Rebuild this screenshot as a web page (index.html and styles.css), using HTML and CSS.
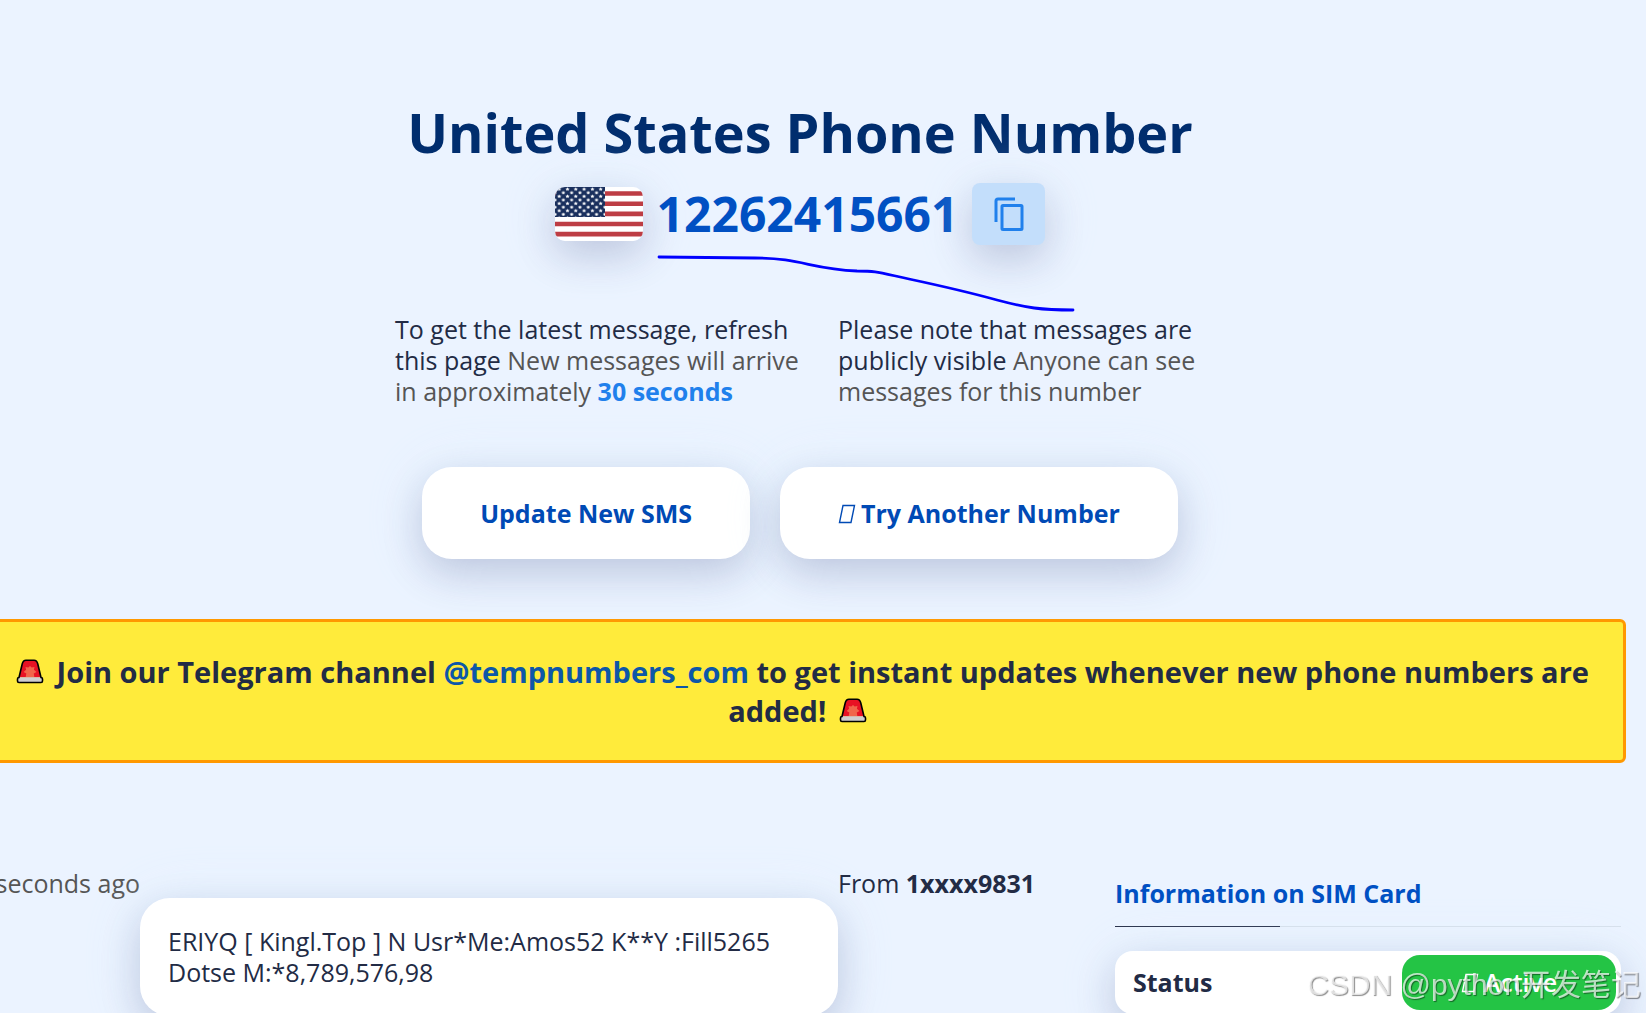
FILE: index.html
```
<!DOCTYPE html>
<html lang="en">
<head>
    <meta charset="UTF-8">
    <meta name="viewport" content="width=device-width, initial-scale=1.0">
    <title>United States Phone Number</title>
    <link rel="stylesheet" href="styles.css">
</head>
<body>

<!-- Shared shapes -->
<svg class="defs" width="0" height="0" aria-hidden="true">
    <defs>
        <symbol id="siren" viewBox="0 0 28 25">
            <path d="M3 18.500 6.200 5C6.800 2.500 8 1.300 10 1.300h8c2 0 3.200 1.200 3.800 3.700L25 18.500z" fill="#e81224"/>
            <path d="m14 7 1.700 1.600 2.800-.6-.6 2.700 2.600 2.300-2.700 1.500.6 4H9.600l.7-4L7.600 13l2.500-2.300-.6-2.700 2.800.6z" fill="#f1664b"/>
            <path d="M1.500 19q0-.8.8-.8h23.400q.8 0 .8.800v3.700q0 .8-.8.800H2.300q-.8 0-.8-.8z" fill="#d0cecf"/>
            <path d="M3 18.500 6.200 5C6.800 2.500 8 1.300 10 1.300h8c2 0 3.200 1.200 3.800 3.700L25 18.500q1.500 0 1.500 1.500v2q0 1.500-1.500 1.500H3Q1.500 23.500 1.500 22v-2q0-1.500 1.500-1.500z" fill="none" stroke="#000" stroke-width="1.600"/>
        </symbol>
        <symbol id="box" viewBox="0 0 18 20">
            <path d="M5 1.500h11.500L13 18.500H1.500z" fill="none" stroke="currentColor" stroke-width="1.400"/>
        </symbol>
        <pattern id="stars" width="8.300" height="7.200" patternUnits="userSpaceOnUse">
            <path id="star" d="m4.200.2.600 1.200 1.400.2-1 1 .3 1.300-1.300-.7-1.300.7.300-1.300-1-1 1.400-.2z" fill="#fff"/>
            <use href="#star" x="-4.150" y="3.600"/>
            <use href="#star" x="4.150" y="3.600"/>
        </pattern>
    </defs>
</svg>

<main class="page">
    <section class="hero">
        <h1>United States Phone Number</h1>

        <div class="number-row">
            <svg class="flag" viewBox="0 0 88 54" role="img" aria-label="United States">
                <rect width="88" height="54" fill="#fff"/>
                <path d="M0 6.500h88M0 16.700h88M0 26.900h88M0 37h88M0 47.100h88" stroke="#bd3d44" stroke-width="4.600"/>
                <rect width="50" height="30" fill="#192f5d"/>
                <rect width="50" height="30" fill="url(#stars)"/>
            </svg>
            <span class="number">12262415661</span>
            <button class="copy" type="button" aria-label="Copy number">
                <svg viewBox="0 0 30 34" width="30" height="34" fill="none" stroke="#2080ec" stroke-width="3">
                    <path d="M21 2H4Q2 2 2 4v21"/>
                    <rect x="8" y="8.500" width="20" height="24" rx="1"/>
                </svg>
            </button>
            <svg class="curve" viewBox="0 0 420 60" width="420" height="60" aria-hidden="true">
                <path d="M2 4 98 5C144 5 154 16 200 18C220 18 220 19 252 26C280 32 311 39 340 47C370 55 384 57 416 57" fill="none" stroke="#0000ff" stroke-width="2.800" stroke-linecap="round"/>
            </svg>
        </div>

        <div class="notes">
            <p>To get the latest message, refresh this page <span>New messages will arrive in approximately <b>30 seconds</b></span></p>
            <p>Please note that messages are publicly visible <span>Anyone can see messages for this number</span></p>
        </div>

        <div class="actions">
            <button class="btn" type="button">Update New SMS</button>
            <button class="btn" type="button"><svg class="box"><use href="#box"/></svg>Try Another Number</button>
        </div>
    </section>

    <div class="banner">
        <svg class="siren"><use href="#siren"/></svg>
        Join our Telegram channel <a href="#">@tempnumbers_com</a> to get instant updates whenever new phone numbers are added!
        <svg class="siren"><use href="#siren"/></svg>
    </div>

    <section class="content">
        <div class="time">seconds ago</div>
        <div class="message">ERIYQ [ Kingl.Top ] N Usr*Me:Amos52 K**Y :Fill5265 Dotse M:*8,789,576,98</div>
        <div class="from">From <b>1xxxx9831</b></div>
        <aside class="sim">
            <h2>Information on SIM Card</h2>
            <div class="line"></div>
            <div class="status">
                <b>Status</b>
                <span class="badge"><svg class="box"><use href="#box"/></svg>Active</span>
            </div>
        </aside>
    </section>
</main>

<div class="watermark">CSDN @python开发笔记</div>

</body>
</html>
```

FILE: styles.css
```
* {
    box-sizing: border-box;
}
body {
    margin: 0;
    height: 100vh;
    overflow: hidden;
    background-color: #ebf3ff;
    color: #222b45;
    font-family: "Open Sans", "Noto Sans", sans-serif;
    font-size: 25px;
    line-height: 31px;
}
h1, h2, p {
    margin: 0;
}
button {
    border: none;
    font: inherit;
    cursor: pointer;
}
.defs {
    position: absolute;
}

/* wider than the window on the left side */
.page {
    margin: 0 20px 0 -26px;
}

.hero {
    display: flex;
    flex-direction: column;
    align-items: center;
    padding-top: 96px;
}
h1 {
    color: #002d6e;
    font-size: 54px;
    line-height: 72px;
    font-weight: 700;
}
.number-row {
    position: relative;
    display: flex;
    align-items: center;
    gap: 14px;
    margin-top: 15px;
}
.flag {
    width: 88px;
    height: 54px;
    border-radius: 10px;
}
.flag, .copy, .btn, .message, .status {
    box-shadow: 0 14px 40px rgba(20, 20, 90, 0.2), 0 4px 60px rgba(225, 245, 255, 0.6);
}
.number {
    color: #0050c3;
    font-size: 48px;
    line-height: 62px;
    font-weight: 700;
}
.copy {
    display: flex;
    align-items: center;
    justify-content: center;
    width: 73px;
    height: 62px;
    padding: 0;
    border-radius: 8px;
    background-color: #c3defb;
}
.curve {
    position: absolute;
    top: 70px;
    left: 102px;
}

.notes {
    display: grid;
    grid-template-columns: 413px 367px;
    gap: 30px;
    margin-top: 69px;
}
.notes span {
    color: #555;
}
.notes b {
    color: #2080ec;
}

.actions {
    display: flex;
    gap: 30px;
    margin-top: 60px;
}
.btn {
    height: 92px;
    padding: 0 58px;
    border-radius: 30px;
    background-color: #fff;
    color: #004ab5;
    font-weight: 700;
}
.box {
    width: 18px;
    height: 20px;
    margin-right: 5px;
    vertical-align: -1px;
}

.banner {
    margin-top: 60px;
    padding: 30px;
    border: 3px solid #ff9800;
    border-radius: 6px;
    background-color: #ffeb3b;
    color: #222b45;
    font-size: 29px;
    line-height: 39px;
    font-weight: 700;
    text-align: center;
}
.banner a {
    color: #0d57a8;
    text-decoration: none;
}
.siren {
    width: 28px;
    height: 25px;
    margin: 0 5px;
    vertical-align: -1px;
}

.content {
    display: grid;
    grid-template-columns: 166fr 698fr 277fr 506fr;
    align-items: start;
    margin: 105px 5px 0 0;
}
.time {
    color: #555;
    text-align: right;
    white-space: nowrap;
}
.message {
    margin-top: 30px;
    padding: 28px;
    border-radius: 30px;
    background-color: #fff;
}
.sim {
    padding-top: 10px;
}
.sim h2 {
    color: #0050c3;
    font-size: 25px;
    line-height: 31px;
}
.line {
    height: 1px;
    margin: 17px 0 24px;
    background: linear-gradient(to right, #222b45 165px, #d6dfeb 165px);
}
.status {
    display: flex;
    align-items: center;
    justify-content: space-between;
    padding: 4px 5px 4px 18px;
    border-radius: 18px;
    background-color: #fff;
}
.badge {
    width: 214px;
    border-radius: 18px;
    background-color: #24c445;
    color: #fff;
    font-weight: 600;
    line-height: 55px;
    text-align: center;
}

.watermark {
    position: fixed;
    right: 5px;
    bottom: 8px;
    color: rgba(255, 255, 255, 0.7);
    font-family: "Liberation Sans", "Noto Sans CJK SC", sans-serif;
    font-size: 30px;
    line-height: 40px;
    text-shadow: 1px 1px 1px rgba(0, 0, 0, 0.45);
}
```
